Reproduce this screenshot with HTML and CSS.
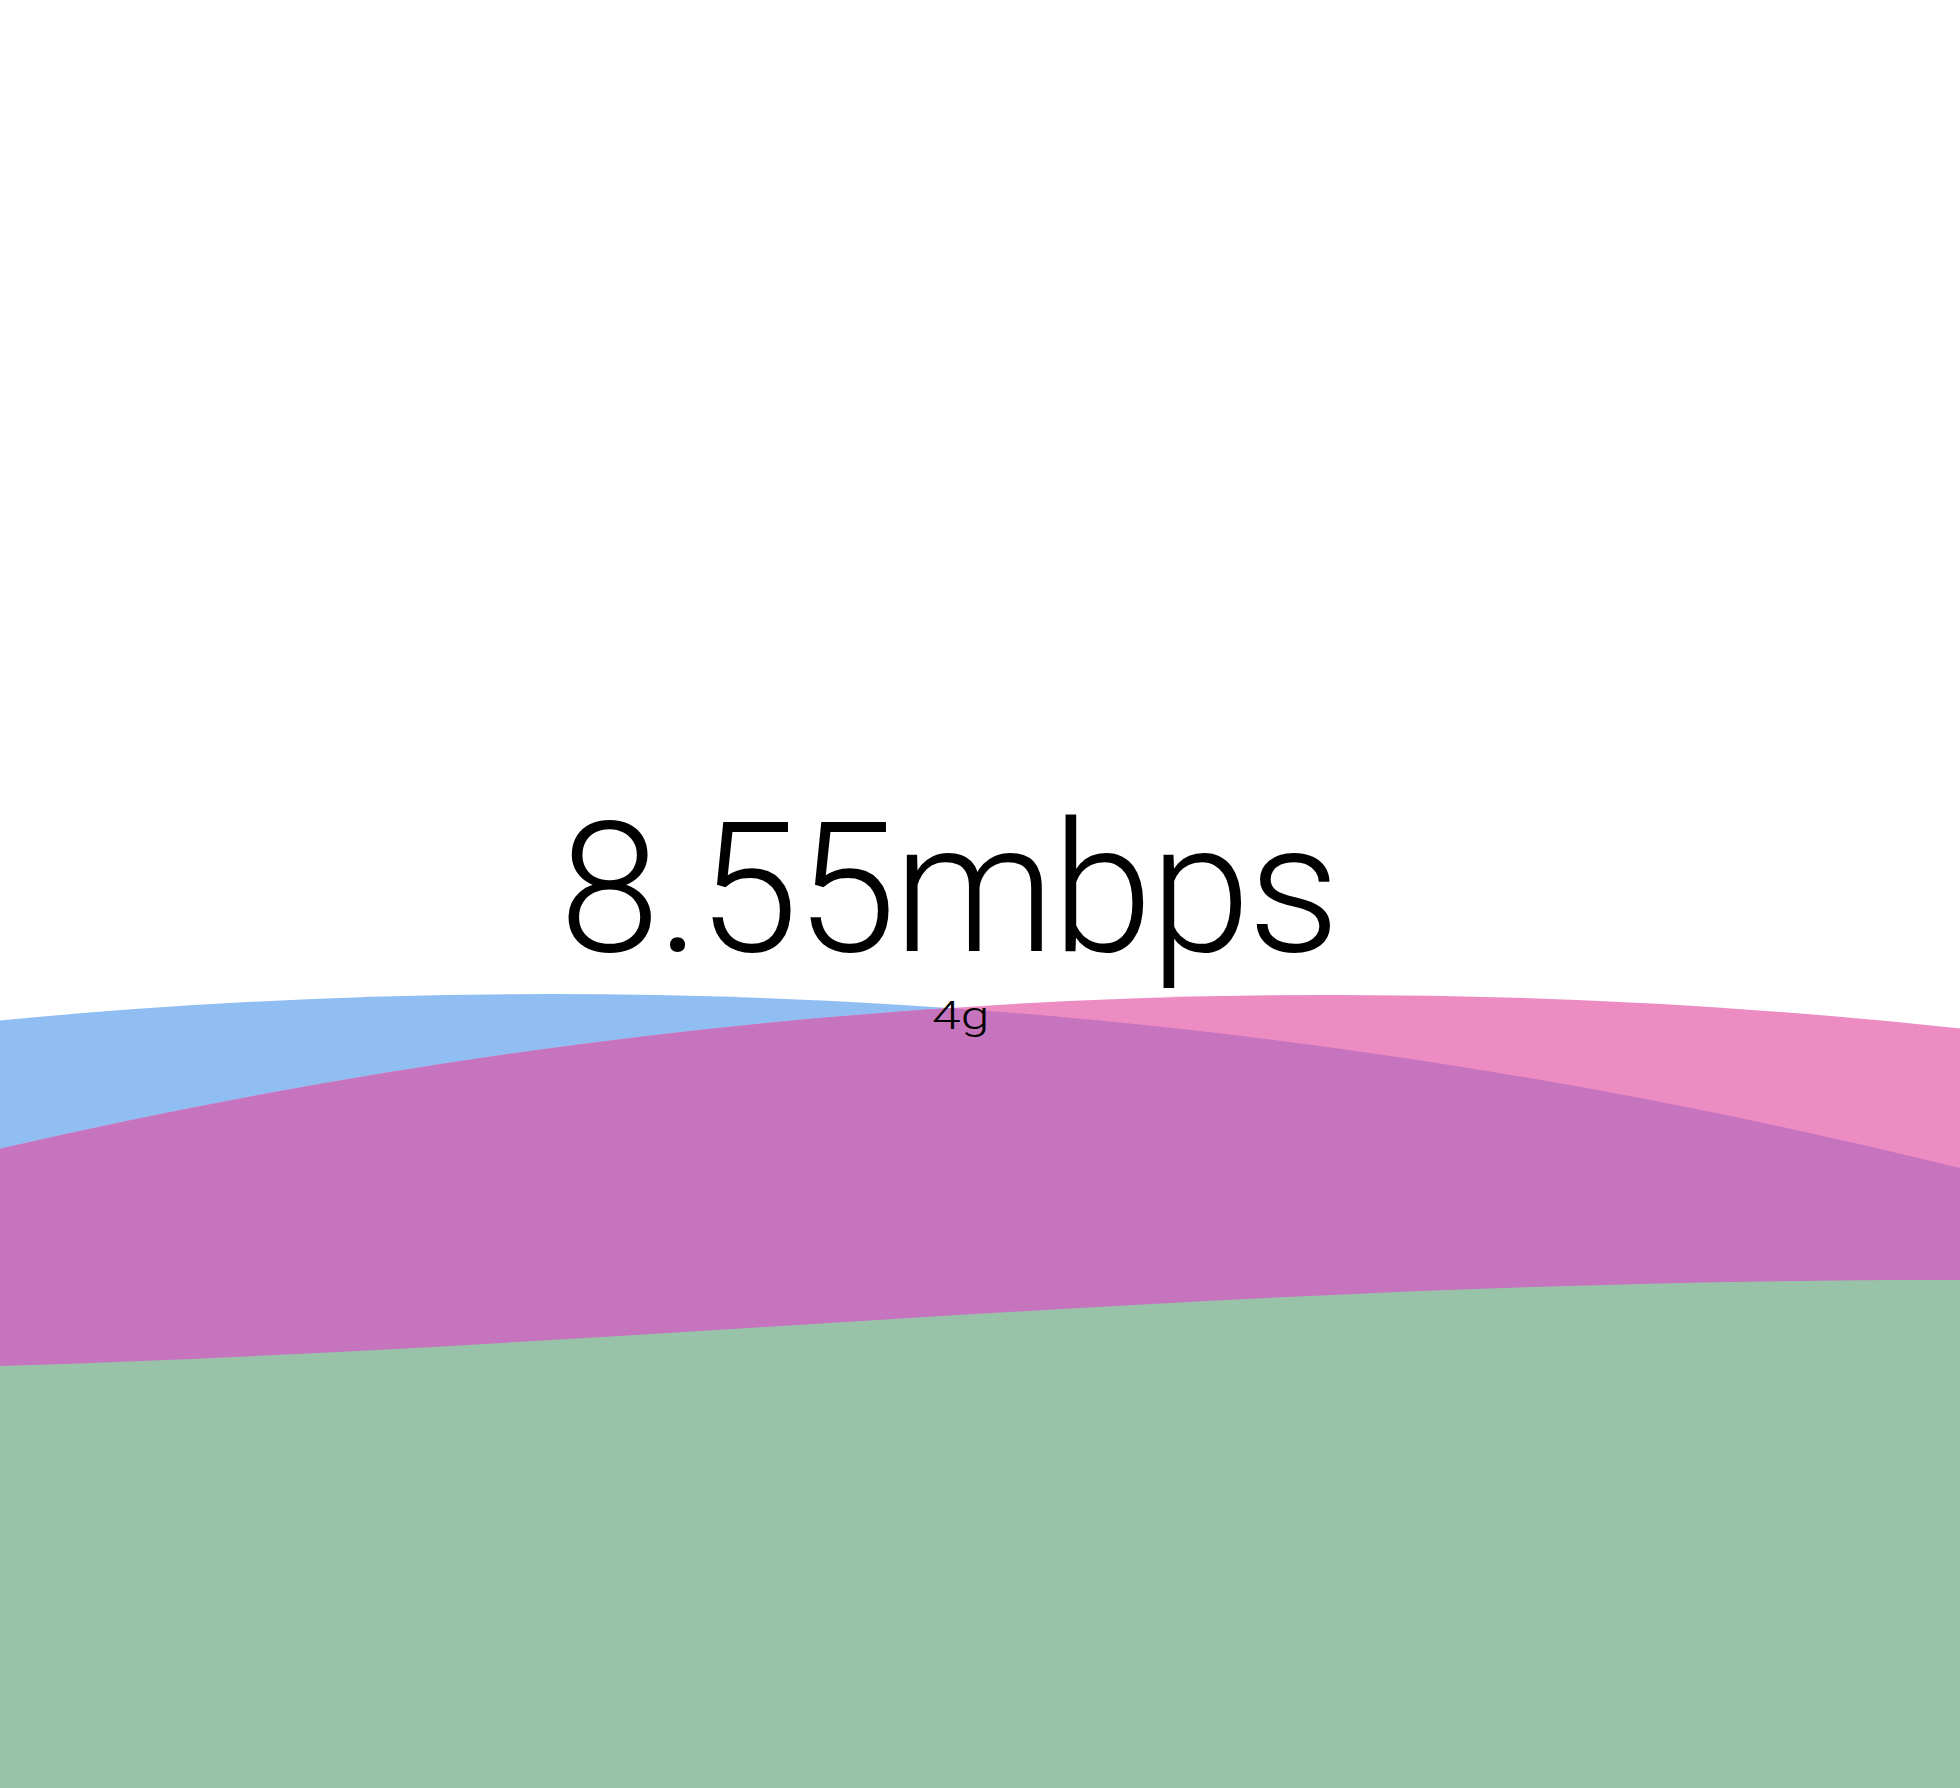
FILE: index.html
```html
<!DOCTYPE html>
<html lang="en">
<head>
  <meta charset="UTF-8" />
  <meta name="viewport" content="width=device-width, initial-scale=1.0" />
  <title>Speed</title>
  <link rel="stylesheet" href="styles.css">
</head>
<body>

  <div class="stage">
    <svg class="waves" viewBox="0 0 1960 1788" preserveAspectRatio="none">
      <defs>
        <clipPath id="pinkClip">
          <path d="M0,1148.7 Q980,923.3 1960,1028.4 V1788 H0 Z" />
        </clipPath>
      </defs>
      <path class="wave-blue" d="M0,1020.5 Q980,926.2 1960,1168 V1788 H0 Z" />
      <path class="wave-pink" d="M0,1148.7 Q980,923.3 1960,1028.4 V1788 H0 Z" />
      <path class="wave-mix" clip-path="url(#pinkClip)" d="M0,1020.5 Q980,926.2 1960,1168 V1788 H0 Z" />
      <path class="wave-green" d="M0,1366 C653,1346.4 1240,1279 1960,1280 V1788 H0 Z" />
    </svg>

    <div class="readout">
      <div class="speed">8.55mbps</div>
      <div class="network">4g</div>
    </div>
  </div>

</body>
</html>
```

FILE: styles.css
```css
html, body {
  margin: 0;
  height: 100%;
}

body {
  background: #ffffff;
  font-family: Roboto, "Liberation Sans", sans-serif;
  color: #000000;
}

.stage {
  display: grid;
  height: 100vh;
  overflow: hidden;
}

.waves,
.readout {
  grid-area: 1 / 1;
}

.waves {
  width: 100%;
  height: 100%;
  display: block;
}

.wave-blue { fill: #90bef3; }
.wave-pink { fill: #ed8bc3; }
.wave-mix { fill: #c774bf; }
.wave-green { fill: #98c3a9; }

.readout {
  display: flex;
  flex-direction: column;
  align-items: center;
  padding-top: 798px;
  padding-right: 64px;
}

.speed {
  font-size: 182px;
  font-weight: 300;
  line-height: 1;
  letter-spacing: -3px;
}

.network {
  margin-top: 17px;
  margin-left: 26px;
  font-size: 39px;
  font-weight: 300;
  line-height: 1;
  transform: scaleX(1.32);
}
```
